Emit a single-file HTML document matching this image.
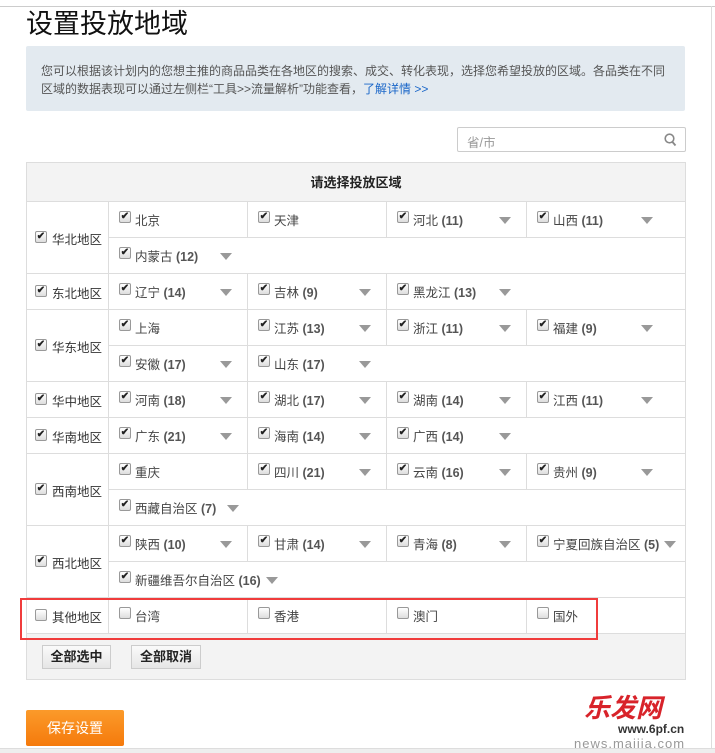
<!DOCTYPE html>
<html><head><meta charset="utf-8">
<style>
*{margin:0;padding:0;box-sizing:border-box}
body{width:715px;height:753px;position:relative;background:#fff;font-family:"Liberation Sans","Noto Sans CJK SC",sans-serif;font-size:12.5px;color:#333;overflow:hidden}
.a{position:absolute}
.cell{position:absolute;height:36px;border-bottom:1px solid #ddd;background:#fff}
.bl{border-left:1px solid #ddd}
.cb{position:absolute;left:10px;top:9px;width:12px;height:12px;border:1px solid #999;border-radius:2px;background:linear-gradient(#fff,#ddd);font-size:10px;line-height:10px;text-align:center;color:#222;font-weight:bold}
.t{position:absolute;left:26px;top:8px;white-space:nowrap;color:#444}
.t b{color:#555}
.ar{position:absolute;top:15px;width:0;height:0;border-left:6px solid transparent;border-right:6px solid transparent;border-top:7px solid #999}
.btn{position:absolute;height:24px;border:1px solid #ccc;background:linear-gradient(#fafafa,#e6e6e6);font-weight:bold;font-size:13px;line-height:22px;text-align:center;color:#222}
</style></head><body>
<div class="a" style="left:0;top:6px;width:715px;height:1px;background:#ccc"></div>
<div class="a" style="left:711px;top:6px;width:1px;height:747px;background:#ddd"></div>
<div class="a" style="left:26px;top:2px;font-size:27px;color:#111">设置投放地域</div>
<div class="a" style="left:26px;top:46px;width:659px;height:65px;background:#e3eaf0;border-radius:2px"></div>
<div class="a" style="left:41px;top:62px;width:640px;font-size:12px;line-height:18px;color:#555;white-space:nowrap">您可以根据该计划内的您想主推的商品品类在各地区的搜索、成交、转化表现，选择您希望投放的区域。各品类在不同<br>区域的数据表现可以通过左侧栏“工具&gt;&gt;流量解析”功能查看，<span style="color:#1a66c8">了解详情 &gt;&gt;</span></div>
<div class="a" style="left:457px;top:127px;width:229px;height:25px;border:1px solid #ccc;border-radius:2px"></div>
<div class="a" style="left:467px;top:132px;color:#999">省/市</div>
<svg class="a" style="left:664px;top:133px" width="13" height="14" viewBox="0 0 13 14"><circle cx="5.5" cy="5.5" r="4.3" fill="none" stroke="#888" stroke-width="1.6"/><path d="M8.5 9l3 3.5" stroke="#888" stroke-width="1.8"/></svg>
<div class="a" style="left:26px;top:162px;width:660px;height:518px;border:1px solid #ddd;background:#f3f3f3"></div>
<div class="a" style="left:27px;top:163px;width:658px;height:39px;border-bottom:1px solid #ddd;text-align:center;line-height:40px;font-weight:bold;color:#222;font-size:13px">请选择投放区域</div>
<div id="g"></div>
<script>
var rows=[
[202,2,"华北地区",[["北京"],["天津"],["河北",11],["山西",11]],[["内蒙古",12]]],
[274,1,"东北地区",[["辽宁",14],["吉林",9],["黑龙江",13]]],
[310,2,"华东地区",[["上海"],["江苏",13],["浙江",11],["福建",9]],[["安徽",17],["山东",17]]],
[382,1,"华中地区",[["河南",18],["湖北",17],["湖南",14],["江西",11]]],
[418,1,"华南地区",[["广东",21],["海南",14],["广西",14]]],
[454,2,"西南地区",[["重庆"],["四川",21],["云南",16],["贵州",9]],[["西藏自治区",7]]],
[526,2,"西北地区",[["陕西",10],["甘肃",14],["青海",8],["宁夏回族自治区",5]],[["新疆维吾尔自治区",16]]],
[598,1,"其他地区",[["台湾"],["香港"],["澳门"],["国外"]],null,1]
];
var xs=[108,247,386,526,685],h="";
function cell(x,y,w,name,n,bl,un,arx){
 var s='<div class="cell'+(bl?' bl':'')+'" style="left:'+x+'px;top:'+y+'px;width:'+w+'px">';
 s+='<div class="cb">'+(un?'':'✔')+'</div><div class="t">'+name+(n!==undefined?' <b>('+n+')</b>':'')+'</div>';
 if(n!==undefined)s+='<div class="ar" style="left:'+arx+'px"></div>';
 return s+'</div>';
}
rows.forEach(function(r){
 var y=r[0],H=r[1]*36,un=r[5];
 h+='<div class="cell" style="left:27px;top:'+y+'px;width:81px;height:'+H+'px"><div class="cb" style="top:'+(H/2-7)+'px;left:8px">'+(un?'':'✔')+'</div><div class="t" style="left:25px;top:'+(H/2-9)+'px;color:#333">'+r[2]+'</div></div>';
 var c=r[3];
 for(var i=0;i<c.length;i++){
  var x=xs[i],w=(i==c.length-1?685:xs[i+1])-x;
  var arx=(xs[i+1]||685)-x-28; if(i==3)arx=114;
  if(c[i][0]=="宁夏回族自治区")arx=137;
  h+=cell(x,y,w,c[i][0],c[i][1],1,un,arx);
 }
 if(r[4]){var c2=r[4];
  for(var j=0;j<c2.length;j++){
   var x2=xs[j],w2=(j==c2.length-1?685:xs[j+1])-x2;
   var a2=(c2[j][0]=="新疆维吾尔自治区")?157:(c2[j][0]=="西藏自治区"?118:(xs[j+1]-x2-28));
   h+=cell(x2,y+36,w2,c2[j][0],c2[j][1],1,un,a2);
  }}
});
document.getElementById('g').innerHTML=h;
</script>
<div class="btn" style="left:42px;top:645px;width:69px">全部选中</div>
<div class="btn" style="left:131px;top:645px;width:70px">全部取消</div>
<div class="a" style="left:20px;top:598px;width:578px;height:42px;border:2px solid #f03c3c"></div>
<div class="a" style="left:26px;top:710px;width:98px;height:36px;background:linear-gradient(#fb9a2a,#f57a0c);color:#fff;font-size:14px;line-height:36px;text-align:center;border-radius:2px">保存设置</div>
<div class="a" style="left:584px;top:688px;font-size:26px;font-weight:bold;font-style:italic;color:#d8232a">乐发网</div>
<div class="a" style="left:618px;top:722px;font-size:12px;font-weight:bold;color:#333">www.6pf.cn</div>
<div class="a" style="left:574px;top:736px;font-size:13px;color:#999;letter-spacing:1px">news.maijia.com</div>
<div class="a" style="left:0;top:748px;width:715px;height:5px;background:#eee;border-top:1px solid #ddd"></div>
</body></html>
